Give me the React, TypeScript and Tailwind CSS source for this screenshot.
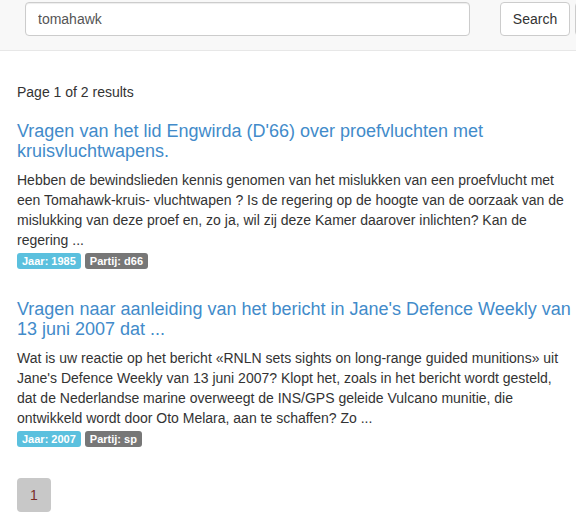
import React from "react";

const results = [
  {
    title: "Vragen van het lid Engwirda (D'66) over proefvluchten met kruisvluchtwapens.",
    body: "Hebben de bewindslieden kennis genomen van het mislukken van een proefvlucht met een Tomahawk-kruis- vluchtwapen ? Is de regering op de hoogte van de oorzaak van de mislukking van deze proef en, zo ja, wil zij deze Kamer daarover inlichten? Kan de regering ...",
    year: "1985",
    party: "d66",
  },
  {
    title: "Vragen naar aanleiding van het bericht in Jane's Defence Weekly van 13 juni 2007 dat ...",
    body: "Wat is uw reactie op het bericht «RNLN sets sights on long-range guided munitions» uit Jane's Defence Weekly van 13 juni 2007? Klopt het, zoals in het bericht wordt gesteld, dat de Nederlandse marine overweegt de INS/GPS geleide Vulcano munitie, die ontwikkeld wordt door Oto Melara, aan te schaffen? Zo ...",
    year: "2007",
    party: "sp",
  },
];

function Label({ children, className }: { children: React.ReactNode; className: string }) {
  return (
    <span
      className={`inline-block h-[16px] px-[5px] rounded-[3px] text-[11px] font-bold leading-[16px] text-white ${className}`}
    >
      {children}
    </span>
  );
}

export default function App() {
  return (
    <div
      className="w-[576px] h-[526px] overflow-hidden bg-white text-[#333] text-[14px] leading-[20px]"
      style={{ fontFamily: '"Liberation Sans", Arial, sans-serif' }}
    >
      <div className="h-[51px] bg-[#f8f8f8] border-b border-[#e7e7e7] flex items-start pt-[2px] pl-[25px]">
        <input
          defaultValue="tomahawk"
          className="w-[445px] h-[34px] shrink-0 rounded-[4px] border border-[#ccc] bg-white px-[12px] text-[14px] text-[#555] outline-none shadow-[inset_0_1px_1px_rgba(0,0,0,0.075)]"
        />
        <button className="ml-[30px] w-[70px] h-[34px] shrink-0 rounded-[4px] border border-[#ccc] bg-white text-[14px] text-[#333]">
          Search
        </button>
        <button className="ml-[5px] w-[40px] h-[34px] shrink-0 rounded-[4px] border border-[#ccc] bg-white" />
      </div>

      <div className="w-[573px] pl-[17px]">
        <p className="mt-[31px]">Page 1 of 2 results</p>

        <div className="mt-[19px] flex flex-col gap-[30px]">
          {results.map((r) => (
            <div key={r.year}>
              <h3 className="text-[18px] leading-[20px] text-[#428bca]">{r.title}</h3>
              <p className="mt-[9px]">{r.body}</p>
              <div className="mt-[3px] flex gap-[4px]">
                <Label className="bg-[#5bc0de]">Jaar: {r.year}</Label>
                <Label className="bg-[#777]">Partij: {r.party}</Label>
              </div>
            </div>
          ))}
        </div>

        <div className="mt-[31px] flex">
          <span className="w-[34px] h-[34px] rounded-[4px] bg-[#c8c8c8] flex items-center justify-center text-[14px] text-[#7a2e28]">
            1
          </span>
        </div>
      </div>
    </div>
  );
}
